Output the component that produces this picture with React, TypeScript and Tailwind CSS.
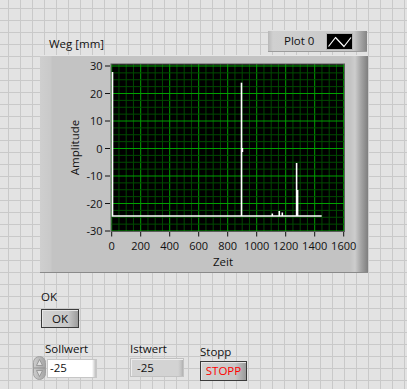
import React from 'react';

// scale mapping inside the graph frame (frame origin = page 40,55)
const X = (v: number) => 71.7 + v * 0.145;
const Y = (v: number) => 11 + (30 - v) * 2.75;

const xTicks = [0, 200, 400, 600, 800, 1000, 1200, 1400, 1600];
const yTicks = [30, 20, 10, 0, -10, -20, -30];

function Graph() {
  const minorX = Array.from({ length: 33 }, (_, i) => i * 50);
  const minorY = Array.from({ length: 25 }, (_, i) => 30 - i * 2.5);

  return (
    <svg width="328" height="218" className="block">
      {/* plot area */}
      <rect x="71" y="9" width="233.5" height="167.5" fill="#000" />
      {minorX.map((v, i) => (
        <line key={'mx' + i} x1={X(v)} x2={X(v)} y1="9" y2="176.5" stroke={i % 4 === 0 ? '#00a000' : '#004a00'} strokeWidth="1" />
      ))}
      {minorY.map((v, i) => (
        <line key={'my' + i} x1="71" x2="304.5" y1={Y(v)} y2={Y(v)} stroke={i % 4 === 0 ? '#00a000' : '#004a00'} strokeWidth="1" />
      ))}
      <rect x="71" y="9" width="233.5" height="167.5" fill="none" stroke="#5c5c5c" strokeWidth="1" />

      {/* data */}
      <g stroke="#fff" fill="none" strokeWidth="1.6">
        <path d="M72.5 17 V161 H281.7" />
        <path d="M201.5 161 V27.7" />
        <path d="M202.4 97 V93" />
        <path d="M232.3 161 V158.5" />
        <path d="M239.3 161 V156" />
        <path d="M242.3 161 V157.5" />
        <path d="M256.6 161 V108" />
        <path d="M257.6 161 V135" />
      </g>

      {/* y axis */}
      <g fontFamily="Open Sans, sans-serif" fontSize="11" fill="#111">
        {yTicks.map((v) => (
          <g key={'y' + v}>
            <line x1="65" x2="70" y1={Y(v)} y2={Y(v)} stroke="#111" strokeWidth="1" />
            <text x="62.5" y={Y(v) + 4} textAnchor="end">
              {v}
            </text>
          </g>
        ))}
        {xTicks.map((v) => (
          <g key={'x' + v}>
            <line x1={X(v)} x2={X(v)} y1="177" y2="181.5" stroke="#111" strokeWidth="1" />
            <text x={X(v)} y="195" textAnchor="middle">
              {v}
            </text>
          </g>
        ))}
      </g>
      <g fontFamily="Open Sans, sans-serif" fontSize="11.5" fill="#111">
        <text x="39" y="92.5" textAnchor="middle" transform="rotate(-90 39 92.5)">
          Amplitude
        </text>
        <text x="183" y="211" textAnchor="middle">
          Zeit
        </text>
      </g>
    </svg>
  );
}

function Legend() {
  return (
    <div className="mr-[1px] flex h-[22px] w-[99px] items-center bg-[linear-gradient(to_right,#b8b8b8,#d0d0d0_5px,#c8c8c8_86px,#a8a8a8_92px,#858585_99px)] shadow-[inset_0_1px_0_#e2e2e2,inset_0_-1px_0_#9c9c9c]">
      <span className="ml-[16px] leading-[14px]">Plot 0</span>
      <div className="ml-[12px] h-[17px] w-[27px] border border-[#b4b4b4] bg-black">
        <svg width="25" height="15" className="block">
          <polyline points="1.5,12.5 8.5,3.5 17,12.5 24,3.5" fill="none" stroke="#fff" strokeWidth="1.2" strokeLinejoin="round" />
        </svg>
      </div>
    </div>
  );
}

function Arrows() {
  return (
    <svg width="13" height="24" className="block">
      <defs>
        <linearGradient id="arr" x1="0" x2="1" y1="0" y2="0">
          <stop offset="0" stopColor="#cdcdcd" />
          <stop offset="1" stopColor="#a4a4a4" />
        </linearGradient>
      </defs>
      <rect x="0.5" y="0.5" width="12" height="23" rx="6" fill="url(#arr)" stroke="#a0a0a0" />
      <line x1="1" y1="12" x2="12" y2="12" stroke="#909090" />
      <path d="M6.5 3.5 L9.5 9.5 H3.5 Z" fill="#dedede" stroke="#8e8e8e" strokeWidth="0.8" />
      <path d="M6.5 20.5 L9.5 14.5 H3.5 Z" fill="#dedede" stroke="#8e8e8e" strokeWidth="0.8" />
    </svg>
  );
}

export default function App() {
  return (
    <div className="h-[389px] w-[407px] overflow-hidden bg-[#e3e3e3] bg-[linear-gradient(to_right,#c9c9c9_1px,transparent_1px),linear-gradient(to_bottom,#c9c9c9_1px,transparent_1px)] bg-size-[12px_12px] bg-position-[8px_8px] pt-[30px] font-['Open_Sans',sans-serif] text-[11.5px] text-[#111]">
      <div className="ml-[40px] w-[328px]">
        <div className="flex h-[22px] items-end justify-between">
          <span className="pb-[1px] pl-[9px] leading-[14px]">Weg [mm]</span>
          <Legend />
        </div>
        <div className="mt-[3px] h-[218px] bg-[linear-gradient(to_right,#cfcfcf,#c9c9c9_11px,#c3c3c3_12px,#c3c3c3_310px,#cdcdcd_315px,#a4a4a4_321px,#7e7e7e_328px)] shadow-[inset_0_1px_0_#e6e6e6,inset_0_-1px_0_#8a8a8a]">
          <Graph />
        </div>
      </div>

      <div className="ml-[41px] mt-[17px] leading-[14px]">OK</div>
      <div className="ml-[41px] mt-[5px] flex h-[19px] w-[38px] items-center justify-center border border-[#3c3c3c] bg-[linear-gradient(to_right,#d2d2d2,#c8c8c8_26px,#9c9c9c)] shadow-[inset_1px_1px_0_#e6e6e6] leading-[14px]">
        OK
      </div>

      <div className="mt-[14px] flex items-start">
        <div className="ml-[33px] w-[64px]">
          <div className="ml-[12px] leading-[14px]">Sollwert</div>
          <div className="flex items-center">
            <Arrows />
            <div className="ml-[1px] flex h-[19px] w-[50px] items-center border border-[#c6c6c6] bg-[linear-gradient(to_right,#fff_44px,#dcdcdc_46px,#bdbdbd)] pl-[2px] leading-[14px]">
              -25
            </div>
          </div>
        </div>
        <div className="ml-[33px] w-[54px]">
          <div className="leading-[14px]">Istwert</div>
          <div className="mt-[2px] flex h-[19px] w-[54px] items-center border border-[#c2c2c2] bg-[linear-gradient(to_right,#d3d3d3_47px,#c4c4c4_50px,#b0b0b0)] pl-[6px] shadow-[inset_1px_1px_0_#ededed] leading-[14px]">
            -25
          </div>
        </div>
        <div className="ml-[16px] mt-[3px] w-[47px]">
          <div className="leading-[14px]">Stopp</div>
          <div className="mt-[2px] flex h-[20px] w-[47px] items-center justify-center border border-[#3a3a3a] bg-[linear-gradient(to_right,#d2d2d2,#c8c8c8_34px,#9a9a9a)] text-[#ff0000] shadow-[inset_1px_1px_0_#e6e6e6] leading-[14px]">
            STOPP
          </div>
        </div>
      </div>
    </div>
  );
}
